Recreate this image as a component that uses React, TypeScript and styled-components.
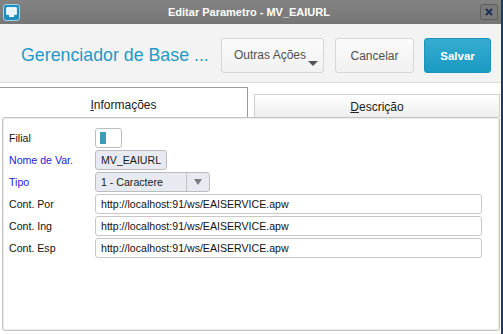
import styled, { createGlobalStyle } from "styled-components";

const GlobalStyle = createGlobalStyle`
    body {
        margin: 0;
        font-family: "Liberation Sans", Arial, sans-serif;
        background: #ffffff;
    }
`

const Window = styled.div`
    width: 503px;
    height: 334px;
    box-sizing: border-box;
    border-right: 2px solid #1d3a66;
    display: flex;
    flex-direction: column;
    background: #ffffff;
    overflow: hidden;
`

const TitleBar = styled.div`
    height: 24px;
    flex-shrink: 0;
    display: flex;
    align-items: center;
    padding: 0 3px 0 3px;
    background: linear-gradient(#838383, #767676);
`

const TitleText = styled.div`
    flex: 1;
    text-align: center;
    color: #ffffff;
    font-size: 11px;
    font-weight: bold;
    padding-right: 2px;
`

const AppIcon = styled.div`
    width: 17px;
    height: 17px;
    box-sizing: border-box;
    border: 1px solid #9fd0e6;
    border-radius: 3px;
    background: #1f8fbf;
    display: flex;
    align-items: center;
    justify-content: center;
`

const CloseButton = styled.div`
    width: 18px;
    height: 16px;
    box-sizing: border-box;
    border: 1px solid #5e5e5e;
    border-radius: 3px;
    background: #7a7a7a;
    display: flex;
    align-items: center;
    justify-content: center;
`

const Header = styled.div`
    height: 59px;
    flex-shrink: 0;
    box-sizing: border-box;
    display: flex;
    align-items: flex-start;
    padding: 14px 10px 0 21px;
    background: #f3f3f3;
    border-bottom: 1px solid #dcdcdc;
`

const PageTitle = styled.div`
    flex: 1;
    color: #1f9ac4;
    font-size: 17.8px;
    line-height: 35px;
`

const Button = styled.div<{ $primary?: boolean; $width: number; $gap?: number }>`
    position: relative;
    width: ${p => p.$width}px;
    height: 35px;
    box-sizing: border-box;
    margin-left: ${p => p.$gap ?? 11}px;
    border-radius: 3px;
    display: flex;
    align-items: center;
    justify-content: center;
    font-size: ${p => p.$primary ? "11.5px" : "12px"};
    font-weight: ${p => p.$primary ? "bold" : "normal"};
    color: ${p => p.$primary ? "#ffffff" : "#505050"};
    border: 1px solid ${p => p.$primary ? "#1c93b8" : "#d6d6d6"};
    background: ${p => p.$primary
        ? "linear-gradient(#36acd0, #1a9ac2)"
        : "linear-gradient(#fbfbfb, #f1f1f1)"};
`

const MenuButton = styled(Button)`
    justify-content: flex-start;
    padding-left: 12px;
    padding-bottom: 2px;

    &::after {
        content: "";
        position: absolute;
        right: 5px;
        bottom: 6px;
        border-left: 5px solid transparent;
        border-right: 5px solid transparent;
        border-top: 5px solid #555555;
    }
`

const TabRow = styled.div`
    display: flex;
    align-items: flex-end;
    height: 30px;
    margin-top: 4px;
    flex-shrink: 0;
`

const Tab = styled.div<{ $active?: boolean }>`
    box-sizing: border-box;
    height: ${p => p.$active ? "30px" : "23px"};
    width: ${p => p.$active ? "248px" : "246px"};
    margin-left: ${p => p.$active ? "0" : "6px"};
    display: flex;
    align-items: center;
    justify-content: center;
    font-size: 12px;
    color: #202020;
    border: 1px solid ${p => p.$active ? "#9a9a9a" : "#d0d0d0"};
    border-bottom: none;
    border-left: ${p => p.$active ? "none" : "1px solid #d0d0d0"};
    background: ${p => p.$active ? "#ffffff" : "linear-gradient(#ffffff, #eeeeee)"};
    padding-top: ${p => p.$active ? "4px" : "2px"};
`

const Panel = styled.div`
    flex: 1;
    margin: 0 1px 3px 2px;
    border: 1px solid #c4c4c4;
    box-shadow: inset 0 0 0 1px #ececec;
    border-radius: 3px;
    background: #ffffff;
    padding: 10px 0 0 6px;
    display: flex;
    flex-direction: column;
    gap: 2px;
`

const Row = styled.div`
    display: flex;
    align-items: center;
    height: 20px;
`

const Label = styled.div<{ $blue?: boolean }>`
    width: 86px;
    font-size: 10.6px;
    color: ${p => p.$blue ? "#2323d6" : "#111111"};
`

const Toggle = styled.div`
    width: 27px;
    height: 20px;
    box-sizing: border-box;
    border: 1px solid #bdbdbd;
    border-radius: 3px;
    background: #ffffff;
    padding: 3px 0 0 4px;
`

const ToggleBar = styled.div`
    width: 6px;
    height: 12px;
    background: #3a9db3;
`

const ReadOnly = styled.div`
    height: 20px;
    box-sizing: border-box;
    border: 1px solid #bcbcbc;
    border-radius: 3px;
    background: #e7eaf0;
    padding: 0 5px;
    display: flex;
    align-items: center;
    font-size: 10.6px;
    color: #1a1a1a;
`

const Select = styled.div`
    width: 115px;
    height: 20px;
    box-sizing: border-box;
    border: 1px solid #bcbcbc;
    border-radius: 3px;
    background: #e7eaf0;
    display: flex;
    font-size: 10.6px;
    color: #1a1a1a;
`

const SelectValue = styled.div`
    flex: 1;
    display: flex;
    align-items: center;
    padding-left: 5px;
`

const SelectArrow = styled.div`
    width: 22px;
    border-left: 1px solid #c4c4c4;
    display: flex;
    align-items: center;
    justify-content: center;

    &::after {
        content: "";
        border-left: 4.5px solid transparent;
        border-right: 4.5px solid transparent;
        border-top: 6px solid #7a7a7a;
    }
`

const TextInput = styled.div`
    width: 387px;
    height: 20px;
    box-sizing: border-box;
    border: 1px solid #c8c8c8;
    border-radius: 3px;
    background: #ffffff;
    padding: 0 5px;
    display: flex;
    align-items: center;
    font-size: 10.6px;
    color: #111111;
`

const url = "http://localhost:91/ws/EAISERVICE.apw"

const contents = [
    { label: "Cont. Por", value: url },
    { label: "Cont. Ing", value: url },
    { label: "Cont. Esp", value: url },
]

export default function App() {
    return (
        <Window>
            <GlobalStyle />
            <TitleBar>
                <AppIcon>
                    <svg width="11" height="10" viewBox="0 0 11 10">
                        <rect x="0.5" y="0.5" width="10" height="7" rx="0.5" fill="#ffffff" stroke="#d8eef8" />
                        <rect x="1.5" y="1.5" width="8" height="5" fill="#e9f4fa" />
                        <rect x="3" y="8" width="5" height="2" fill="#ffffff" />
                    </svg>
                </AppIcon>
                <TitleText>Editar Parametro - MV_EAIURL</TitleText>
                <CloseButton>
                    <svg width="8" height="8" viewBox="0 0 8 8">
                        <path d="M1 1 L7 7 M7 1 L1 7" stroke="#1e2f5a" strokeWidth="2" />
                    </svg>
                </CloseButton>
            </TitleBar>
            <Header>
                <PageTitle>Gerenciador de Base ...</PageTitle>
                <MenuButton $width={103}>Outras Ações</MenuButton>
                <Button $width={79}>Cancelar</Button>
                <Button $width={67} $gap={10} $primary>Salvar</Button>
            </Header>
            <TabRow>
                <Tab $active><span><u>I</u>nformações</span></Tab>
                <Tab><span><u>D</u>escrição</span></Tab>
            </TabRow>
            <Panel>
                <Row>
                    <Label>Filial</Label>
                    <Toggle><ToggleBar /></Toggle>
                </Row>
                <Row>
                    <Label $blue>Nome de Var.</Label>
                    <ReadOnly>MV_EAIURL</ReadOnly>
                </Row>
                <Row>
                    <Label $blue>Tipo</Label>
                    <Select>
                        <SelectValue>1 - Caractere</SelectValue>
                        <SelectArrow />
                    </Select>
                </Row>
                {contents.map(c => (
                    <Row key={c.label}>
                        <Label>{c.label}</Label>
                        <TextInput>{c.value}</TextInput>
                    </Row>
                ))}
            </Panel>
        </Window>
    )
}
